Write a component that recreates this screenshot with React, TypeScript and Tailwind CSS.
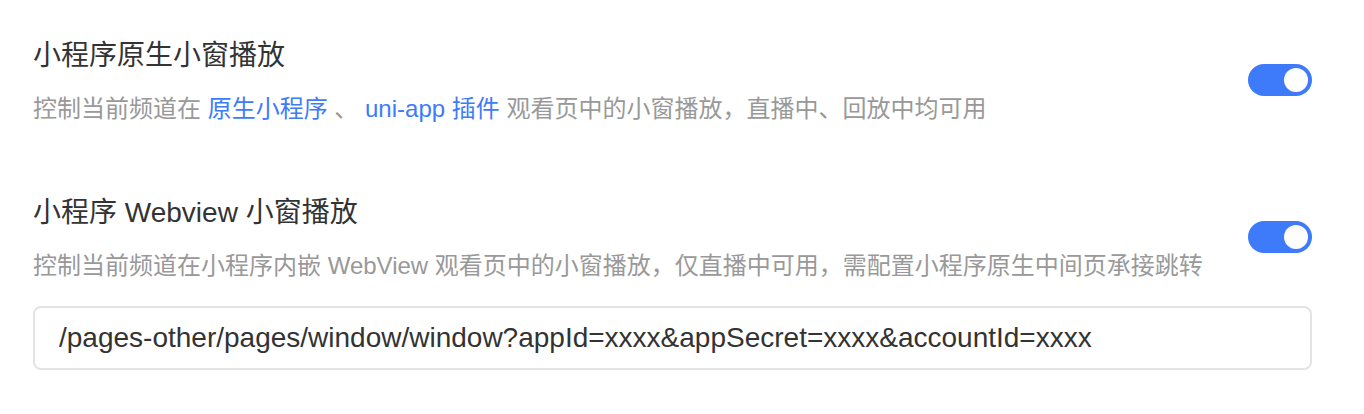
import { useState } from 'react';

const cjk = 'font-["Helvetica_Neue","Liberation_Sans","Noto_Sans_CJK_SC",sans-serif]';

function Toggle({ on, onChange }: { on: boolean; onChange: () => void }) {
  return (
    <button
      type="button"
      onClick={onChange}
      className={`relative w-16 h-8 rounded-full shrink-0 transition-colors ${on ? 'bg-[#3e7bfa]' : 'bg-[#d9d9d9]'}`}
    >
      <span
        className={`absolute top-1 w-6 h-6 rounded-full bg-white transition-all ${on ? 'left-9' : 'left-1'}`}
      />
    </button>
  );
}

export default function App() {
  const [nativeOn, setNativeOn] = useState(true);
  const [webviewOn, setWebviewOn] = useState(true);

  return (
    <div className={`bg-white w-[1364px] h-[414px] pl-[33px] pr-[52px] pt-[36px] ${cjk}`}>
      {/* 原生小窗 */}
      <div className="flex items-center justify-between">
        <div>
          <h3 className="text-[28px] leading-[40px] text-[#333333]">小程序原生小窗播放</h3>
          <p className="mt-[19px] text-[24px] leading-[28px] text-[#999999]">
            控制当前频道在 <a className="text-[#3e7bfa]">原生小程序</a> 、{' '}
            <a className="text-[#3e7bfa]">uni-app 插件</a> 观看页中的小窗播放，直播中、回放中均可用
          </p>
        </div>
        <Toggle on={nativeOn} onChange={() => setNativeOn(!nativeOn)} />
      </div>

      {/* Webview 小窗 */}
      <div className="mt-[70px] flex items-center justify-between">
        <div>
          <h3 className="text-[28px] leading-[40px] text-[#333333]">小程序 Webview 小窗播放</h3>
          <p className="mt-[19px] text-[24px] leading-[28px] text-[#999999]">
            控制当前频道在小程序内嵌 WebView 观看页中的小窗播放，仅直播中可用，需配置小程序原生中间页承接跳转
          </p>
        </div>
        <Toggle on={webviewOn} onChange={() => setWebviewOn(!webviewOn)} />
      </div>

      <input
        readOnly
        value="/pages-other/pages/window/window?appId=xxxx&appSecret=xxxx&accountId=xxxx"
        className="mt-[26px] block w-full h-[64px] px-[24px] rounded-[8px] border-2 border-[#e3e3e3] text-[28px] text-[#333333] outline-none"
      />
    </div>
  );
}
